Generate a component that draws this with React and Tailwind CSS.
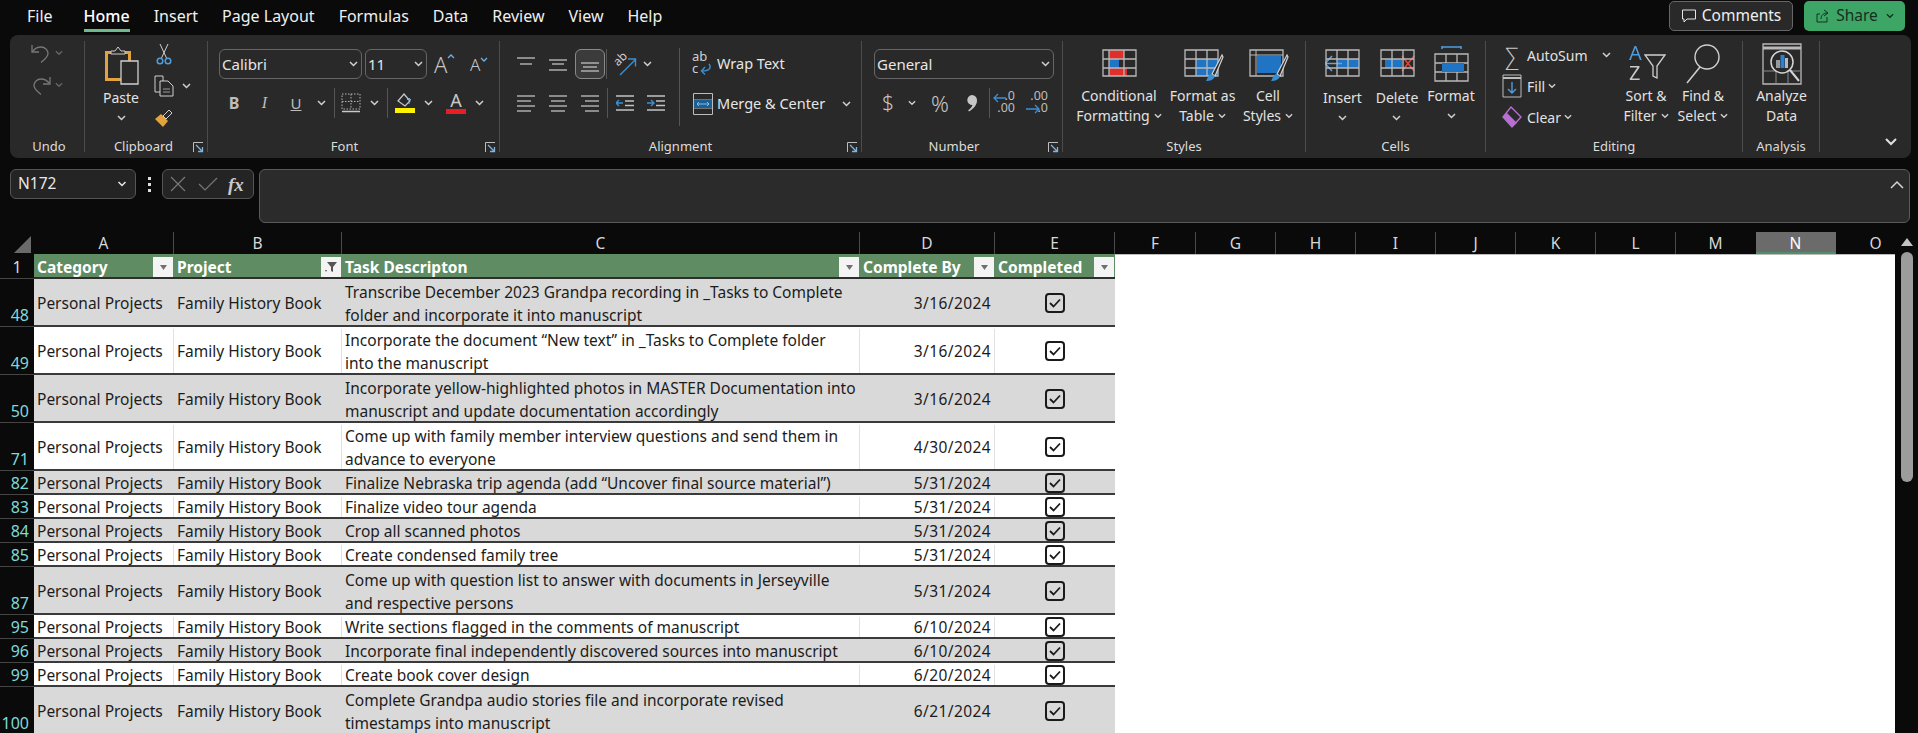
import React from "react";

const UI = "font-['Noto_Sans','Open_Sans',sans-serif]";

const Chev = ({ c = "#d0d0d0", w = 9 }) => (
  <svg width={w} height="6" viewBox="0 0 9 6" fill="none" className="shrink-0"><path d="M1 1l3.5 3.5L8 1" stroke={c} strokeWidth="1.5" /></svg>
);
const Launcher = () => (
  <svg width="11" height="11" viewBox="0 0 11 11" fill="none" className="absolute right-[3px] top-[5px]">
    <path d="M.5 10V.5H10" stroke="#bdbdbd" /><path d="M3 3l6 6M9.500 5v4.500H5" stroke="#7fb4e0" strokeWidth="1.300" />
  </svg>
);
const Sep = ({ cls = "h-[30px]" }) => <div className={`w-px bg-[#555] shrink-0 ${cls}`} />;
const Box = ({ cls, children }) => <div className={`flex items-center justify-center shrink-0 ${cls}`}>{children}</div>;

const Group = ({ cls, label, launcher, labelCls = "", children }) => (
  <div className={`flex flex-col h-[111px] border-r border-[#4c4c4c] shrink-0 ${cls}`}>
    <div className="h-[96px] flex">{children}</div>
    <div className={`relative h-[19px] mb-[-4px] leading-[19px] text-center text-[13px] text-[#dcdcdc] ${labelCls}`}>
      {label}{launcher && <Launcher />}
    </div>
  </div>
);

const Undo = ({ flip }) => (
  <svg width="22" height="22" viewBox="0 0 22 22" fill="none" className={flip ? "-scale-x-100" : ""}>
    <path d="M2 3v7h7" stroke="#777" strokeWidth="1.300" /><path d="M2.500 9.500C5 6 8 5 11 5c4 0 7 3 7 6.500 0 3-2 5-7 9" stroke="#777" strokeWidth="1.300" />
  </svg>
);
const Paste = () => (
  <svg width="36" height="40" viewBox="0 0 36 40" fill="none">
    <path d="M2 6h26v30H2z" fill="#e0a33f" /><path d="M5 9h20v24H5z" fill="#292929" />
    <path d="M8 9V6h4l3-4 3 4h4v3z" fill="#292929" stroke="#cfcfcf" />
    <path d="M18 16h17v23H18z" fill="#292929" stroke="#cfcfcf" strokeWidth="1.300" />
  </svg>
);
const Cut = () => (
  <svg width="16" height="22" viewBox="0 0 16 22" fill="none">
    <path d="M4 1l6.500 14M12 1L5.500 15" stroke="#cfcfcf" /><circle cx="4" cy="18" r="2.800" stroke="#4f9ddd" strokeWidth="1.500" /><circle cx="12" cy="18" r="2.800" stroke="#4f9ddd" strokeWidth="1.500" />
  </svg>
);
const Copy = () => (
  <svg width="20" height="22" viewBox="0 0 20 22" fill="none">
    <path d="M1 1h8v16H1z" stroke="#cfcfcf" /><path d="M6 6h8l5 5v10H6z" fill="#292929" stroke="#cfcfcf" /><path d="M9 14h7M9 17h7" stroke="#9a9a9a" />
  </svg>
);
const Painter = () => (
  <svg width="20" height="20" viewBox="0 0 20 20" fill="none">
    <path d="M1 11l6-5 7 7-5 6z" fill="#e0a33f" /><path d="M9 8l6-6 3 3-6 6z" fill="#292929" stroke="#cfcfcf" />
  </svg>
);
const BigA = ({ size, up }) => (
  <div className="flex items-start">
    <span className={`text-[#c6c6c6] font-light leading-none ${size}`}>A</span>
    <svg width="8" height="5" viewBox="0 0 8 5" fill="none" className="mt-[1px]"><path d={up ? "M1 4l3-3 3 3" : "M1 1l3 3 3-3"} stroke="#6fb1e6" strokeWidth="1.300" /></svg>
  </div>
);
const Borders = () => (
  <svg width="20" height="20" viewBox="0 0 20 20" fill="none">
    <path d="M1 1h18v15H1zM1 8.500h18M10 1v15" stroke="#b5b5b5" strokeDasharray="1.500 1.500" /><path d="M1 18.500h18" stroke="#c9c9c9" strokeWidth="1.500" />
  </svg>
);
const Fill = () => (
  <svg width="22" height="22" viewBox="0 0 22 22" fill="none">
    <path d="M4 9l6-7 6 7-5 5z" stroke="#c9c9c9" strokeWidth="1.200" /><path d="M15 12V6m-2 2l2-2 2 2" stroke="#6fb1e6" /><path d="M1 16h20v5H1z" fill="#fff200" />
  </svg>
);
const FontColor = () => (
  <div className="flex flex-col items-center w-[20px]">
    <span className="text-[18px] leading-[17px] text-[#c9c9c9]">A</span>
    <div className="w-[20px] h-[5px] bg-[#ea1c24]" />
  </div>
);
const Lines = ({ rows }) => (
  <svg width="18" height="18" viewBox="0 0 18 18" fill="none">
    {rows.map(([y, x1, x2], i) => <path key={i} d={`M${x1} ${y}H${x2}`} stroke="#c2c2c2" strokeWidth="1.300" />)}
  </svg>
);
const Orient = () => (
  <div className="relative w-[26px] h-[26px]">
    <span className="absolute left-[1px] top-[1px] -rotate-45 text-[12px] leading-[14px] text-[#cfcfcf]">ab</span>
    <svg width="26" height="26" viewBox="0 0 26 26" fill="none" className="absolute left-0 top-0"><path d="M8 24L23 9M16 8h7.500v7.500" stroke="#3b8fd1" strokeWidth="1.400" /></svg>
  </div>
);
const Indent = ({ rev }) => (
  <svg width="18" height="18" viewBox="0 0 18 18" fill="none">
    <path d="M0 2h18M0 16h18M9 7h9M9 11.500h9" stroke="#c2c2c2" strokeWidth="1.300" />
    <path d={rev ? "M0 9h7M4 6l3 3-3 3" : "M7 9H0M3 6L0 9l3 3"} stroke="#3b8fd1" strokeWidth="1.400" />
  </svg>
);
const Wrap = () => (
  <div className="relative w-[20px] h-[24px]">
    <span className="absolute left-0 -top-[2px] whitespace-pre text-[13px] leading-[12px] text-[#cfcfcf]">{"ab\nc"}</span>
    <svg width="12" height="13" viewBox="0 0 12 13" fill="none" className="absolute left-[8px] top-[11px]"><path d="M9 1c3 4 0 7-7 7M5 4L1.500 8 5 11.500" stroke="#3b8fd1" strokeWidth="1.400" /></svg>
  </div>
);
const Merge = () => (
  <svg width="20" height="22" viewBox="0 0 20 22" fill="none">
    <path d="M.500.500h19v21H.5z" stroke="#bdbdbd" /><path d="M.5 7h19M.5 15h19" stroke="#bdbdbd" /><path d="M1 7h18v8H1z" fill="#1e5f92" /><path d="M4 11h12M6 9l-2 2 2 2M14 9l2 2-2 2" stroke="#7cc0f0" />
  </svg>
);
const Dec = ({ inc }) => (
  <div className="relative w-[30px] h-[24px]">
    <span className="absolute right-[5px] -top-[1px] whitespace-pre text-right text-[12.500px] leading-[12px] text-[#bdbdbd]">{inc ? ".00\n.0" : ".0\n.00"}</span>
    {inc ? (
      <svg width="14" height="10" viewBox="0 0 14 10" fill="none" className="absolute left-[3px] top-[13px]"><path d="M0 5h13M9 1l4 4-4 4" stroke="#3b8fd1" strokeWidth="1.300" /></svg>
    ) : (
      <svg width="14" height="10" viewBox="0 0 14 10" fill="none" className="absolute left-[3px] top-[2px]"><path d="M13 5H1M5 1L1 5l4 4" stroke="#3b8fd1" strokeWidth="1.300" /></svg>
    )}
  </div>
);
const Comma = () => (
  <svg width="12" height="18" viewBox="0 0 12 18" fill="none"><path d="M6 1a5 5 0 0 1 5 5.500c0 4.500-3.500 8.500-8 11l-.8-1.200c2.300-1.700 3.800-3.600 4.300-5.400A4.800 4.800 0 1 1 6 1z" fill="#c6c6c6" /></svg>
);
const Grid = ({ children, w = 35, h = 28 }) => (
  <svg width={w} height={h} viewBox={`0 0 ${w} ${h}`} fill="none">
    {children}
    <path d={`M1 1H34V27H1zM1 10H34M1 19H34M12 1V27M23 1V27`} stroke="#b9b9b9" strokeWidth="1.300" />
  </svg>
);
const Cond = () => (
  <svg width="35" height="28" viewBox="0 0 35 28" fill="none">
    <path d="M7 1h15v9H7z" fill="#e02e2a" /><path d="M7 10h10v9H7z" fill="#1f74c4" /><path d="M7 19h18v8H7z" fill="#e02e2a" />
    <path d="M1 1H34V27H1zM1 10H34M1 19H34M7 1V27M22 1V27" stroke="#b9b9b9" strokeWidth="1.300" />
  </svg>
);
const Brush = () => (
  <svg width="20" height="30" viewBox="0 0 20 30" fill="none" className="absolute right-[-2px] top-[5px]">
    <path d="M18 1L8 20l3 2L19 3z" fill="#292929" stroke="#d5d5d5" strokeWidth="1.200" /><path d="M7 20c-3 1-3 4-5 7 4 0 8-1 9-5z" fill="#3b8fd1" />
  </svg>
);
const FmtTable = () => (
  <div className="relative w-[38px] h-[34px]">
    <Grid><path d="M12 10h22v17H12z" fill="#1f74c4" /></Grid><Brush />
  </div>
);
const CellStyle = () => (
  <div className="relative w-[38px] h-[34px]">
    <svg width="35" height="28" viewBox="0 0 35 28" fill="none"><path d="M1 1h33v26H1z" stroke="#b9b9b9" strokeWidth="1.300" /><path d="M1 6h33M7 1v26" stroke="#b9b9b9" /><path d="M8 7h24v17H8z" fill="#1f74c4" /></svg>
    <Brush />
  </div>
);
const InsertI = () => (
  <Grid><path d="M12 10h22v9H12z" fill="#1f74c4" /><path d="M1 14.500h16M7 7l-7 7.500 7 7.500" stroke="#5aa7e6" strokeWidth="1.500" /></Grid>
);
const DeleteI = () => (
  <Grid><path d="M5 10h17v9H5z" fill="#1f74c4" /><path d="M22 7l12 15M34 7L22 22" stroke="#e2463f" strokeWidth="1.500" /></Grid>
);
const FormatI = () => (
  <svg width="35" height="36" viewBox="0 0 35 36" fill="none">
    <path d="M8 1h19M8-1v4M27-1v4" stroke="#4f9ddd" strokeWidth="1.500" />
    <path d="M1 8H34V35H1zM1 17H34M1 26H34M12 8V35M23 8V35" stroke="#b9b9b9" strokeWidth="1.300" /><path d="M8 17h22v9H8z" fill="#1f74c4" />
  </svg>
);
const SortI = () => (
  <div className="relative w-[44px] h-[40px]">
    <span className="absolute left-[5px] -top-[1px] block whitespace-pre text-[20px] leading-[20px] bg-[linear-gradient(#4f9ddd_50%,#c9c9c9_50%)] bg-clip-text text-transparent">{"A\nZ"}</span>
    <svg width="22" height="26" viewBox="0 0 22 26" fill="none" className="absolute left-[20px] top-[10px]"><path d="M1 1h20l-8 11v12l-4-2V12z" stroke="#cfcfcf" strokeWidth="1.300" /></svg>
  </div>
);
const FindI = () => (
  <svg width="36" height="40" viewBox="0 0 36 40" fill="none"><circle cx="22" cy="13" r="12" stroke="#d0d0d0" strokeWidth="1.400" /><path d="M15 23L2 39" stroke="#d0d0d0" strokeWidth="1.500" /></svg>
);
const Analyze = () => (
  <svg width="40" height="42" viewBox="0 0 40 42" fill="none">
    <path d="M1 1h38v40H1z" stroke="#b9b9b9" strokeWidth="1.300" /><path d="M1 5h38" stroke="#b9b9b9" strokeWidth="3" /><path d="M1 28h38M14 28v13M26 28v13" stroke="#8a8a8a" />
    <circle cx="20" cy="19" r="11" fill="#292929" stroke="#d5d5d5" strokeWidth="1.500" /><path d="M14 17h4v8h-4z" fill="#9a9a9a" /><path d="M18.500 12h4v13h-4z" fill="#2f80cf" /><path d="M23 15h3v10h-3z" fill="#b9b9b9" />
    <path d="M28 27l9 11" stroke="#d5d5d5" strokeWidth="2" />
  </svg>
);
const Sigma = () => <span className="text-[23px] leading-none font-light text-[#c9c9c9]">∑</span>;
const FillDown = () => (
  <svg width="20" height="24" viewBox="0 0 20 24" fill="none"><path d="M1 1h18v22H1z" stroke="#bdbdbd" /><path d="M1 4h18" stroke="#bdbdbd" strokeWidth="2" /><path d="M10 8v11M6 15l4 4 4-4" stroke="#4f9ddd" strokeWidth="1.400" /></svg>
);
const Eraser = () => (
  <svg width="22" height="24" viewBox="0 0 22 24" fill="none"><path d="M10 2l10 10-9 10L2 12z" stroke="#b76fd1" strokeWidth="1.400" /><path d="M6 8l10 10-5 4-9-10z" fill="#b76fd1" /></svg>
);

const Big = ({ cls, icon, lines, chev, iconCls = "h-[37px] pt-0", textCls = "" }) => (
  <div className={`flex flex-col items-center pt-[8px] shrink-0 text-[14px] leading-[20px] text-[#e2e2e2] ${cls}`}>
    <div className={`flex justify-center ${iconCls}`}>{icon}</div>
    <div className={`flex flex-col items-center whitespace-nowrap ${textCls}`}>
      {lines.map((l, i) => (
        <div key={i} className="flex items-center gap-[4px] h-[20px]">
          {l}{i === lines.length - 1 && chev === "in" && <Chev w={8} />}
        </div>
      ))}
      {chev === "below" && <div className="h-[20px] flex items-center"><Chev /></div>}
    </div>
  </div>
);

const Ribbon = () => (
  <div className="mx-[10px] w-[1901px] h-[123px] rounded-[8px] bg-[#292929] pt-[6px] flex">
    <Group cls="w-[75px]" label="Undo" labelCls="pl-[4px]">
      <div className="flex flex-col pl-[20px] pt-[1px] gap-[10px]">
        {[false, true].map((f) => (
          <div key={String(f)} className="flex items-center gap-[3px] h-[22px]"><Undo flip={f} /><Chev c="#666" w={8} /></div>
        ))}
      </div>
    </Group>

    <Group cls="w-[123px]" label="Clipboard" launcher labelCls="pr-[5px]">
      <div className="flex pl-[15px]">
        <div className="flex flex-col items-center w-[42px] pt-[4px] text-[14px] leading-[20px] text-[#e2e2e2]">
          <Paste />
          <div className="mt-[3px]">Paste</div>
          <div className="h-[20px] flex items-center"><Chev /></div>
        </div>
        <div className="flex flex-col ml-[10px] pt-[2px] gap-[10px]">
          <Box cls="w-[24px] h-[22px]"><Cut /></Box>
          <div className="flex items-center gap-[6px] h-[22px]"><Box cls="w-[24px]"><Copy /></Box><Chev /></div>
          <Box cls="w-[24px] h-[22px]"><Painter /></Box>
        </div>
      </div>
    </Group>

    <Group cls="w-[292px]" label="Font" launcher labelCls="pr-[18px]">
      <div className="flex flex-col pl-[11px] pt-[8px]">
        <div className="flex items-center h-[30px]">
          <div className="w-[143px] h-[30px] rounded-[6px] border border-[#666] flex items-center justify-between pl-[2px] pr-[3px] text-[15px] text-[#e6e6e6]">Calibri<Chev /></div>
          <div className="ml-[3px] w-[62px] h-[30px] rounded-[6px] border border-[#666] flex items-center justify-between pl-[2px] pr-[3px] text-[15px] text-[#e6e6e6]">11<Chev /></div>
          <div className="ml-[7px] w-[24px]"><BigA size="text-[22px]" up /></div>
          <div className="ml-[12px]"><BigA size="text-[17px]" /></div>
        </div>
        <div className="flex items-center h-[28px] mt-[10px]">
          <Box cls="w-[30px] text-[16px] font-bold text-[#bdbdbd]">B</Box>
          <Box cls="w-[31px] text-[16px] italic text-[#bdbdbd] font-['Liberation_Serif']">I</Box>
          <Box cls="w-[32px] text-[15px] underline text-[#bdbdbd]">U</Box>
          <Box cls="w-[19px]"><Chev /></Box>
          <Sep cls="h-[30px] ml-[3px]" />
          <Box cls="w-[32px]"><Borders /></Box>
          <Box cls="w-[14px]"><Chev /></Box>
          <Sep cls="h-[30px] ml-[6px]" />
          <Box cls="w-[34px]"><Fill /></Box>
          <Box cls="w-[12px]"><Chev /></Box>
          <Box cls="w-[32px] ml-[6px]"><FontColor /></Box>
          <Box cls="w-[14px]"><Chev /></Box>
        </div>
      </div>
    </Group>

    <Group cls="w-[362px]" label="Alignment" launcher>
      <div className="flex flex-col pl-[10px] pt-[8px] w-[179px] shrink-0">
        <div className="flex items-center h-[30px]">
          <Box cls="w-[32px]"><Lines rows={[[3, 0, 18], [9, 3, 15]]} /></Box>
          <Box cls="w-[32px]"><Lines rows={[[5, 0, 18], [9, 3, 15], [15, 0, 18]]} /></Box>
          <Box cls="w-[30px] h-[30px] ml-[1px] rounded-[6px] border border-[#8a8a8a] bg-[#3b3b3b]"><Lines rows={[[8, 0, 18], [12, 2, 16], [16, 0, 18]]} /></Box>
          <Sep cls="h-[30px] ml-[1px]" />
          <Box cls="w-[36px]"><Orient /></Box>
          <Chev />
        </div>
        <div className="flex items-center h-[28px] mt-[10px]">
          <Box cls="w-[32px]"><Lines rows={[[2, 0, 18], [7, 0, 14], [12, 0, 18], [17, 0, 14]]} /></Box>
          <Box cls="w-[32px]"><Lines rows={[[2, 0, 18], [7, 2, 16], [12, 0, 18], [17, 2, 16]]} /></Box>
          <Box cls="w-[32px]"><Lines rows={[[2, 0, 18], [7, 4, 18], [12, 0, 18], [17, 4, 18]]} /></Box>
          <Sep cls="h-[30px] ml-[1px]" />
          <Box cls="w-[33px]"><Indent /></Box>
          <Box cls="w-[30px]"><Indent rev /></Box>
        </div>
      </div>
      <div className="pt-[7px] h-[85px]"><Sep cls="h-[78px]" /></div>
      <div className="flex flex-col pl-[12px] pt-[8px] text-[14.500px] text-[#e6e6e6]">
        <div className="flex items-center h-[30px] gap-[5px]"><Box cls="w-[20px]"><Wrap /></Box>Wrap Text</div>
        <div className="flex items-center h-[30px] mt-[10px] gap-[4px] whitespace-nowrap"><Box cls="w-[21px]"><Merge /></Box>Merge &amp; Center<div className="ml-[13px]"><Chev /></div></div>
      </div>
    </Group>

    <Group cls="w-[201px]" label="Number" launcher labelCls="pr-[16px]">
      <div className="flex flex-col pl-[12px] pt-[8px]">
        <div className="w-[180px] h-[30px] rounded-[6px] border border-[#666] flex items-center justify-between pl-[2px] pr-[3px] text-[15px] text-[#e6e6e6]">General<Chev /></div>
        <div className="flex items-center h-[28px] mt-[10px]">
          <Box cls="w-[28px] text-[21px] font-light text-[#c6c6c6]">$</Box>
          <Box cls="w-[20px]"><Chev w={8} /></Box>
          <Box cls="w-[36px] text-[22px] font-light text-[#c6c6c6]">%</Box>
          <Box cls="w-[28px]"><Comma /></Box>
          <Sep cls="h-[30px] ml-[3px]" />
          <Box cls="w-[30px]"><Dec /></Box>
          <Box cls="w-[30px] ml-[3px]"><Dec inc /></Box>
        </div>
      </div>
    </Group>

    <Group cls="w-[243px]" label="Styles">
      <div className="flex pl-[10px]">
        <Big cls="w-[92px]" icon={<Cond />} lines={["Conditional", "Formatting"]} chev="in" />
        <Big cls="w-[75px]" icon={<FmtTable />} lines={["Format as", "Table"]} chev="in" />
        <Big cls="w-[56px]" icon={<CellStyle />} lines={["Cell", "Styles"]} chev="in" />
      </div>
    </Group>

    <Group cls="w-[180px]" label="Cells">
      <div className="flex pl-[9px]">
        <Big cls="w-[55px]" icon={<InsertI />} lines={["Insert"]} chev="below" textCls="pt-[2px]" />
        <Big cls="w-[54px]" icon={<DeleteI />} lines={["Delete"]} chev="below" textCls="pt-[2px]" />
        <Big cls="w-[54px]" icon={<FormatI />} lines={["Format"]} chev="below" iconCls="h-[37px] -mt-[3px] pb-0 pt-0" textCls="pt-[3px]" />
      </div>
    </Group>

    <Group cls="w-[257px]" label="Editing">
      <div className="flex pl-[14px]">
        <div className="flex flex-col w-[118px] pt-[2px] gap-[7px] text-[14px] text-[#e2e2e2] shrink-0">
          <div className="flex items-center h-[24px] gap-[3px]"><Box cls="w-[24px]"><Sigma /></Box>AutoSum<div className="ml-[11px]"><Chev /></div></div>
          <div className="flex items-center h-[24px] gap-[3px]"><Box cls="w-[24px]"><FillDown /></Box>Fill<Chev w={8} /></div>
          <div className="flex items-center h-[24px] gap-[3px]"><Box cls="w-[24px]"><Eraser /></Box>Clear<Chev w={8} /></div>
        </div>
        <Big cls="w-[56px] !pt-[3px]" icon={<SortI />} iconCls="h-[42px]" lines={["Sort &", "Filter"]} chev="in" />
        <Big cls="w-[58px] !pt-[3px]" icon={<FindI />} iconCls="h-[42px]" lines={["Find &", "Select"]} chev="in" />
      </div>
    </Group>

    <Group cls="w-[77px]" label="Analysis">
      <Big cls="w-[77px] !pt-[2px]" icon={<Analyze />} iconCls="h-[43px]" lines={["Analyze", "Data"]} />
    </Group>

    <div className="flex-1 flex items-end justify-end pr-[14px] pb-[12px]">
      <svg width="12" height="8" viewBox="0 0 12 8" fill="none"><path d="M1 1l5 5 5-5" stroke="#e0e0e0" strokeWidth="2" /></svg>
    </div>
  </div>
);

const Tabs = () => (
  <div className="flex items-start h-[35px] text-[#efefef]">
    <div className="flex gap-[24px] ml-[27px] w-[1642px] text-[16px]">
      {["File", "Home", "Insert", "Page Layout", "Formulas", "Data", "Review", "View", "Help"].map((t) => (
        <div key={t} className={`h-[32px] leading-[32px] border-b-[3px] whitespace-nowrap ${t === "Home" ? "border-[#6dbb8a] font-medium text-white" : "border-transparent"} ${t === "File" ? "mr-[7px]" : ""}`}>{t}</div>
      ))}
    </div>
    <div className="w-[124px] h-[30px] mt-px rounded-[5px] border border-[#666] bg-[#292929] flex items-center justify-center gap-[5px] shrink-0 text-[15.500px]">
      <svg width="16" height="16" viewBox="0 0 16 16" fill="none"><path d="M1.500 2h13v9H6l-3 3v-3H1.500z" stroke="#e5e5e5" /></svg>Comments
    </div>
    <div className="w-[101px] h-[30px] mt-px ml-[11px] rounded-[5px] bg-[#3da566] text-[#16301f] flex items-center justify-center gap-[5px] shrink-0 text-[15.500px]">
      <svg width="16" height="16" viewBox="0 0 16 16" fill="none"><path d="M2 6h3M2 6v8h10V9M6 11c0-4 3-6 6-6M9 2l4 3-4 3" stroke="#16301f" /></svg>Share<div className="ml-[3px]"><Chev c="#16301f" w={8} /></div>
    </div>
  </div>
);

const FormulaBar = () => (
  <div className="flex items-start h-[54px] mt-[11px] ml-[10px]">
    <div className="w-[126px] h-[30px] rounded-[6px] border border-[#555] bg-[#242424] flex items-center justify-between pl-[7px] pr-[8px] text-[15.500px] text-[#e8e8e8]">N172<Chev c="#e8e8e8" w={10} /></div>
    <div className="w-[26px] h-[30px] flex flex-col items-center justify-center gap-[3px]">
      <div className="w-[3px] h-[3px] bg-[#ddd]" /><div className="w-[3px] h-[3px] bg-[#ddd]" /><div className="w-[3px] h-[3px] bg-[#ddd]" />
    </div>
    <div className="w-[92px] h-[30px] rounded-[6px] border border-[#555] bg-[#242424] flex items-center pl-[7px]">
      <svg width="16" height="16" viewBox="0 0 16 16" fill="none"><path d="M1 1l14 14M15 1L1 15" stroke="#777" strokeWidth="1.200" /></svg>
      <svg width="20" height="16" viewBox="0 0 20 16" fill="none" className="ml-[12px]"><path d="M1 8l6 6L19 2" stroke="#777" strokeWidth="1.200" /></svg>
      <span className="ml-[10px] font-['Liberation_Serif'] italic font-bold text-[19px] leading-none text-[#c9c9c9]">fx</span>
    </div>
    <div className="ml-[5px] w-[1651px] h-[54px] rounded-[6px] border border-[#5a5a5a] bg-[#2b2b2b] flex justify-end pt-[10px] pr-[5px]">
      <svg width="14" height="9" viewBox="0 0 14 9" fill="none"><path d="M1 8l6-6 6 6" stroke="#d5d5d5" strokeWidth="1.500" /></svg>
    </div>
  </div>
);

const COLS = [
  ["A", "w-[140px]"], ["B", "w-[168px]"], ["C", "w-[518px]"], ["D", "w-[135px]"], ["E", "w-[120px]"],
  ["F", "w-[81px]"], ["G", "w-[80px]"], ["H", "w-[80px]"], ["I", "w-[80px]"], ["J", "w-[80px]"],
  ["K", "w-[80px]"], ["L", "w-[80px]"], ["M", "w-[80px]"], ["N", "w-[80px]"], ["O", "w-[80px]"],
];

const ColHeaders = () => (
  <div className="flex h-[22px] text-[15.500px] text-[#d8d8d8] overflow-hidden">
    <div className="w-[34px] flex items-end justify-end pr-[3px] pb-[1px] shrink-0">
      <svg width="17" height="17" viewBox="0 0 17 17"><path d="M17 0v17H0z" fill="#6a6a6a" /></svg>
    </div>
    {COLS.map(([c, w]) => (
      <div key={c} className={`${w} leading-[22px] text-center shrink-0 border-r ${c === "N" ? "bg-[#6b6b6b] border-[#6b6b6b] border-b-2 border-b-[#4f8f69] text-white" : c === "M" || c === "O" ? "border-transparent" : "border-[#4a4a4a]"}`}>{c}</div>
    ))}
  </div>
);

const Tri = ({ filter }) => (
  <div className="w-[20px] h-[20px] bg-[#f4f4f4] flex items-center justify-center shrink-0">
    {filter ? (
      <svg width="13" height="13" viewBox="0 0 13 13"><path d="M2 1h10L8 6v5L6 10V6zM0 9l2 0-1 2z" fill="#555" /></svg>
    ) : (
      <svg width="9" height="5" viewBox="0 0 9 5"><path d="M1 0h7L4.500 5z" fill="#707070" /></svg>
    )}
  </div>
);

const ROWS = [
  ["48", ["Transcribe December 2023 Grandpa recording in _Tasks to Complete", "folder and incorporate it into manuscript"], "3/16/2024"],
  ["49", ["Incorporate the document “New text” in _Tasks to Complete folder", "into the manuscript"], "3/16/2024"],
  ["50", ["Incorporate yellow-highlighted photos in MASTER Documentation into", "manuscript and update documentation accordingly"], "3/16/2024"],
  ["71", ["Come up with family member interview questions and send them in", "advance to everyone"], "4/30/2024"],
  ["82", ["Finalize Nebraska trip agenda (add “Uncover final source material”)"], "5/31/2024"],
  ["83", ["Finalize video tour agenda"], "5/31/2024"],
  ["84", ["Crop all scanned photos"], "5/31/2024"],
  ["85", ["Create condensed family tree"], "5/31/2024"],
  ["87", ["Come up with question list to answer with documents in Jerseyville", "and respective persons"], "5/31/2024"],
  ["95", ["Write sections flagged in the comments of manuscript"], "6/10/2024"],
  ["96", ["Incorporate final independently discovered sources into manuscript"], "6/10/2024"],
  ["99", ["Create book cover design"], "6/20/2024"],
  ["100", ["Complete Grandpa audio stories file and incorporate revised", "timestamps into manuscript"], "6/21/2024"],
];

const Check = () => (
  <svg width="20" height="20" viewBox="0 0 20 20" fill="none">
    <rect x="1" y="1" width="18" height="18" rx="3" stroke="#1a1a1a" strokeWidth="2" /><path d="M5 10l3.500 3.500L15 6.500" stroke="#1a1a1a" strokeWidth="1.800" />
  </svg>
);

const Row = ({ num, lines, date, i }) => {
  const gray = i % 2 === 0;
  const multi = lines.length > 1;
  const rh = multi ? "h-[48px]" : "h-[24px]";
  const bg = gray ? "bg-[#d9d9d9]" : "bg-white";
  const v = gray ? "border-[#d9d9d9]" : "border-[#e2e2e2]";
  return (
    <div className={`flex ${rh}`}>
      <div className="w-[34px] shrink-0 flex items-end justify-end pr-[5px] text-[16px] leading-[22px] text-[#7fd9d9] bg-[#0a0a0a] border-b border-[#444]">{num}</div>
      <div className={`flex w-[1081px] pt-[2px] border-b-[2px] border-b-[#3a3a3a] text-[15.500px] leading-[24px] text-[#1c1c1c] ${bg}`}>
        <div className={`w-[140px] shrink-0 flex items-center pl-[3px] whitespace-nowrap border-r ${v}`}>Personal Projects</div>
        <div className={`w-[168px] shrink-0 flex items-center pl-[3px] whitespace-nowrap border-r ${v}`}>Family History Book</div>
        <div className={`w-[518px] shrink-0 pl-[3px] border-r whitespace-nowrap flex flex-col justify-center ${multi ? "pt-[2px]" : ""} ${v}`}>
          {lines.map((l) => <div key={l} className={multi ? "h-[23px] leading-[23px]" : "h-[20px] leading-[20px]"}>{l}</div>)}
        </div>
        <div className={`w-[135px] shrink-0 flex items-center justify-end pr-[3px] tracking-[0.4px] border-r ${v}`}>{date}</div>
        <div className="w-[120px] shrink-0 flex items-center justify-center"><Check /></div>
      </div>
    </div>
  );
};

const Sheet = () => (
  <div className="flex mt-[9px]">
    <div className="w-[1895px] shrink-0">
      <ColHeaders />
      <div className="flex">
        <div className="w-[1115px] shrink-0">
          <div className="flex h-[25px]">
            <div className="w-[34px] shrink-0 text-center text-[16px] leading-[27px] text-[#d8d8d8] border-b border-[#444]">1</div>
            <div className="flex w-[1081px] pt-[3px] bg-[#5f8c62] border-b-[2px] border-[#2e2e2e] text-[15.500px] font-bold leading-[20px] text-white">
              {[["Category", "w-[140px]"], ["Project", "w-[168px]", true], ["Task Descripton", "w-[518px]"], ["Complete By", "w-[135px]"], ["Completed", "w-[120px]"]].map(([t, w, f]) => (
                <div key={t} className={`${w} shrink-0 flex items-center justify-between pl-[3px] pr-px whitespace-nowrap`}>{t}<Tri filter={f} /></div>
              ))}
            </div>
          </div>
          {ROWS.map((r, i) => <Row key={r[0]} num={r[0]} lines={r[1]} date={r[2]} i={i} />)}
        </div>
        <div className="flex-1 bg-white border-t border-[#bbb]" />
      </div>
    </div>
    <div className="flex-1 flex flex-col items-center pt-[6px]">
      <svg width="12" height="8" viewBox="0 0 12 8" className="shrink-0"><path d="M6 0l6 8H0z" fill="#c4c4c4" /></svg>
      <div className="w-[12px] h-[230px] mt-[6px] rounded-full bg-[#9c9c9c]" />
    </div>
  </div>
);

export default function App() {
  return (
    <div className={`w-[1918px] h-[733px] overflow-hidden bg-[#0a0a0a] ${UI}`}>
      <Tabs />
      <Ribbon />
      <FormulaBar />
      <Sheet />
    </div>
  );
}
